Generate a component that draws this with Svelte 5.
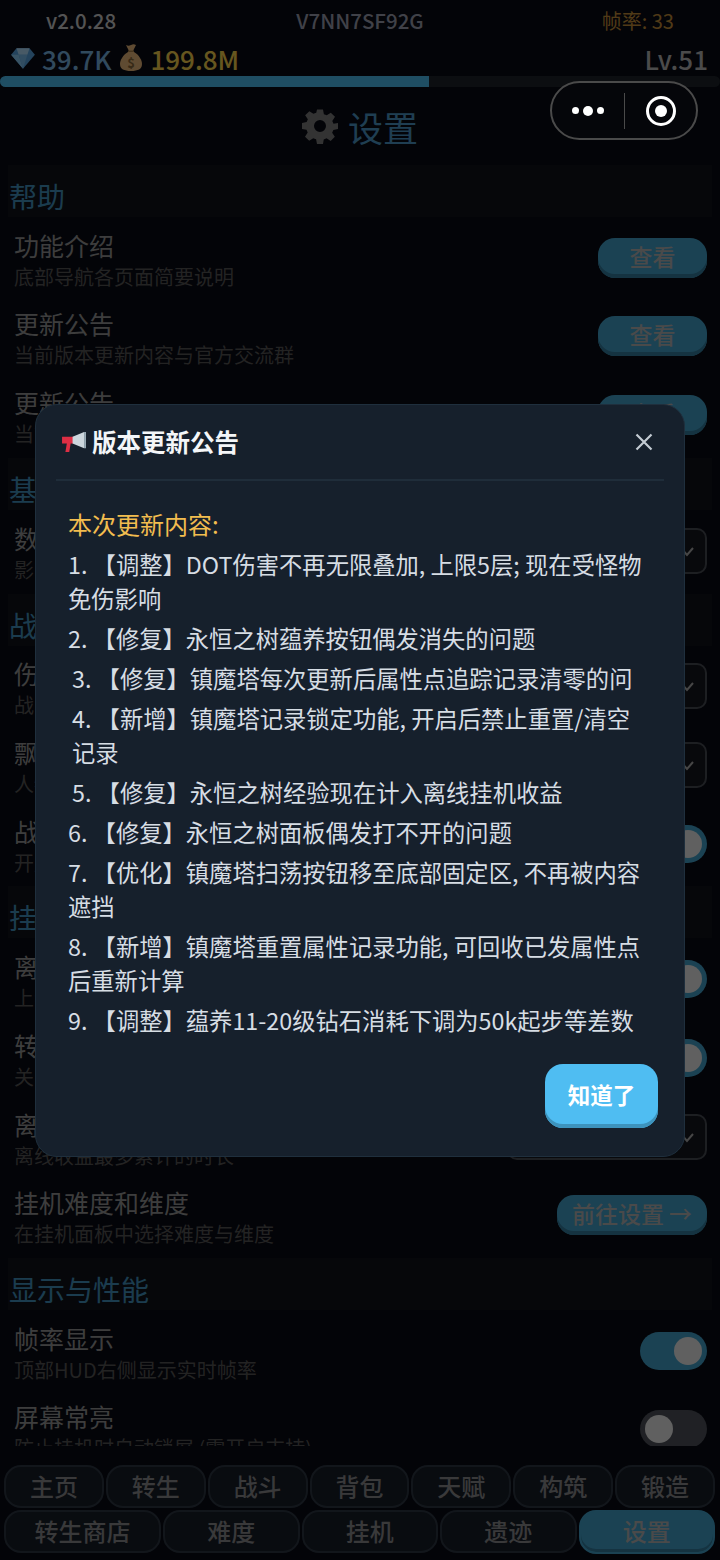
<script>
  const navTop = ['主页', '转生', '战斗', '背包', '天赋', '构筑', '锻造'];
  const navBottom = ['转生商店', '难度', '挂机', '遗迹', '设置'];

  const sections = [
    {
      title: '帮助',
      rows: [
        { name: '功能介绍', desc: '底部导航各页面简要说明', btn: '查看' },
        { name: '更新公告', desc: '当前版本更新内容与官方交流群', btn: '查看' },
        { name: '更新公告', desc: '当前版本更新内容与官方交流群', btn: '查看' }
      ]
    },
    {
      title: '基础设置',
      rows: [{ name: '数字格式', desc: '影响全局数字的显示方式', select: true }]
    },
    {
      title: '战斗显示',
      rows: [
        { name: '伤害显示', desc: '战斗中伤害数字的显示方式', select: true },
        { name: '飘字数量', desc: '人物头顶飘字的数量上限', select: true },
        { name: '战斗特效', desc: '开启后显示战斗特效', toggle: true }
      ]
    },
    {
      title: '挂机设置',
      rows: [
        { name: '离线挂机', desc: '上线时结算离线收益', toggle: true },
        { name: '转生提示', desc: '关闭后不再弹出转生提示', toggle: true },
        { name: '离线时长', desc: '离线收益最多累计的时长', select: true },
        { name: '挂机难度和维度', desc: '在挂机面板中选择难度与维度', btn: '前往设置 →', wide: true }
      ]
    },
    {
      title: '显示与性能',
      rows: [
        { name: '帧率显示', desc: '顶部HUD右侧显示实时帧率', toggle: true },
        { name: '屏幕常亮', desc: '防止挂机时自动锁屏 (需开启支持)', toggle: false }
      ]
    }
  ];

  const notes = [
    { text: '1. 【调整】DOT伤害不再无限叠加, 上限5层; 现在受怪物免伤影响' },
    { text: '2. 【修复】永恒之树蕴养按钮偶发消失的问题' },
    { text: '3. 【修复】镇魔塔每次更新后属性点追踪记录清零的问', nudge: true },
    { text: '4. 【新增】镇魔塔记录锁定功能, 开启后禁止重置/清空记录', nudge: true },
    { text: '5. 【修复】永恒之树经验现在计入离线挂机收益', nudge: true },
    { text: '6. 【修复】永恒之树面板偶发打不开的问题' },
    { text: '7. 【优化】镇魔塔扫荡按钮移至底部固定区, 不再被内容遮挡' },
    { text: '8. 【新增】镇魔塔重置属性记录功能, 可回收已发属性点后重新计算' },
    { text: '9. 【调整】蕴养11-20级钻石消耗下调为50k起步等差数' }
  ];
</script>

<div class="app">
  <header class="hud">
    <div class="hud-top">
      <span>v2.0.28</span>
      <span class="uid">V7NN7SF92G</span>
      <span class="fps">帧率: 33</span>
    </div>
    <div class="hud-res">
      <svg class="res-icon" viewBox="0 0 24 24" width="26" height="26">
        <path d="M6 3h12l5 6-11 13L1 9z" fill="#5aa9e6" />
        <path d="M6 3h12l-2 6H8z" fill="#b5e2ff" />
        <path d="M1 9h7l4 13z" fill="#8cd0fa" />
        <path d="M8 9h8l-4 13z" fill="#7cc0f2" />
      </svg>
      <span class="gems">39.7K</span>
      <svg class="res-icon" viewBox="0 0 24 28" width="24" height="28">
        <path d="M7 1c2 1 3 1 5 0s3-1 5 0l-3 6h-4z" fill="#eebc7d" />
        <path d="M9 8h6c5 3 8 8 8 12 0 5-4 7-11 7S1 25 1 20c0-4 3-9 8-12z" fill="#eebc7d" />
        <path d="M9 6.500h6v1.500H9z" fill="#a87f4a" />
        <text x="12" y="23.500" class="dollar">$</text>
      </svg>
      <span class="gold">199.8M</span>
      <span class="level">Lv.51</span>
    </div>
    <div class="xp"><div class="xp-fill" style="width: 59.6%"></div></div>
  </header>

  <main class="scroll">
    <h1 class="page-title">
      <svg viewBox="0 0 24 24" width="36" height="36">
        <path
          fill="#808080"
          fill-rule="evenodd"
          d="M10 1h4l.6 3.1 1.9.8 2.7-1.8 2.8 2.8-1.8 2.7.8 1.9L24 10v4l-3.1.6-.8 1.9 1.8 2.7-2.8 2.8-2.7-1.8-1.9.8L14 24h-4l-.6-3.1-1.9-.8-2.7 1.8L2 19.100l1.800-2.700-.8-1.900L0 14v-4l3.100-.6.8-1.900L2.100 4.900 4.900 2.100l2.700 1.800 1.900-.8zM12 8a4 4 0 1 0 0 8 4 4 0 0 0 0-8z"
        />
      </svg>
      <span>设置</span>
    </h1>

    {#each sections as section}
      <section>
        <h2 class="section-title">{section.title}</h2>
        {#each section.rows as row}
          <div class="row">
            <div class="row-text">
              <div class="row-name">{row.name}</div>
              <div class="row-desc">{row.desc}</div>
            </div>
            {#if row.btn}
              <button class="btn" class:wide={row.wide}>{row.btn}</button>
            {:else if row.select}
              <div class="select">
                <svg viewBox="0 0 16 16" width="16" height="16">
                  <path d="M2 5l6 7 6-7" fill="none" stroke="#b0b0b0" stroke-width="2" />
                </svg>
              </div>
            {:else}
              <div class="toggle" class:on={row.toggle}><i></i></div>
            {/if}
          </div>
        {/each}
      </section>
    {/each}
  </main>

  <nav class="nav">
    <div class="nav-row">
      {#each navTop as item}
        <div class="tab">{item}</div>
      {/each}
    </div>
    <div class="nav-row bottom">
      {#each navBottom as item}
        <div class="tab" class:active={item === '设置'}>{item}</div>
      {/each}
    </div>
  </nav>

  <div class="overlay">
    <div class="modal">
      <div class="modal-head">
        <div class="modal-title">
          <svg viewBox="0 0 28 24" width="27" height="23">
            <path d="M1 7h12v7H10l-1.500 9H4.500L6 14H1z" fill="#dd2e44" />
            <path d="M12 7l12-5v17l-12-5z" fill="#ccd6dd" />
            <path d="M24 2h2v17h-2z" fill="#99aab5" />
          </svg>
          <span>版本更新公告</span>
        </div>
        <svg class="close" viewBox="0 0 18 18" width="18" height="18">
          <path d="M1.500 1.500l15 15M16.500 1.500l-15 15" stroke="#c3cbd3" stroke-width="2.200" />
        </svg>
      </div>
      <div class="modal-body">
        <div class="notes-title">本次更新内容:</div>
        {#each notes as note}
          <p class="note" class:nudge={note.nudge}>{note.text}</p>
        {/each}
      </div>
      <div class="modal-foot">
        <button class="ok">知道了</button>
      </div>
    </div>
  </div>

  <div class="capsule">
    <div class="dots"><i></i><b></b><i></i></div>
    <span class="sep"></span>
    <div class="target"><i></i></div>
  </div>
</div>

<style>
  :global(body) {
    margin: 0;
    background: #080a14;
  }

  .app {
    position: relative;
    width: 720px;
    height: 1560px;
    display: flex;
    flex-direction: column;
    overflow: hidden;
    background: #080a14;
    color: #9a9a9a;
    font-family: 'Noto Sans CJK SC', 'Noto Sans', sans-serif;
  }

  .hud {
    flex: none;
  }

  .hud-top {
    display: grid;
    grid-template-columns: 1fr 1fr 1fr;
    height: 40px;
    align-items: center;
    padding: 0 46px;
    font-size: 20.500px;
    font-weight: 500;
    color: #d0d0d0;
  }

  .uid {
    text-align: center;
    white-space: nowrap;
    color: #a0a4b4;
  }

  .fps {
    text-align: right;
    color: #c8923a;
    font-size: 20px;
    font-weight: 400;
  }

  .hud-res {
    display: flex;
    align-items: center;
    height: 36px;
    padding: 0 12px 0 10px;
    font-size: 26px;
    font-weight: 500;
  }

  .res-icon {
    flex: none;
  }

  .dollar {
    font-size: 13px;
    font-weight: 700;
    fill: #8a6a3a;
    text-anchor: middle;
  }

  .gems {
    margin: 0 8px 0 6px;
    color: #7cb8e8;
  }

  .gold {
    margin-left: 7px;
    color: #ffd84f;
  }

  .level {
    margin-left: auto;
    color: #bbb;
  }

  .xp {
    height: 11px;
    border-radius: 6px;
    overflow: hidden;
    background: #1e252c;
  }

  .xp-fill {
    height: 100%;
    background: #4fc3f7;
  }

  .scroll {
    flex: 1;
    min-height: 0;
    overflow: hidden;
    margin-bottom: 19px;
  }

  .page-title {
    display: flex;
    justify-content: center;
    align-items: center;
    gap: 10px;
    height: 78px;
    margin: 0;
    font-size: 35px;
    font-weight: 400;
    color: #4f9ccc;
  }

  section + section {
    margin-top: 1.500px;
  }

  .section-title {
    margin: 0 8px 3.600px;
    padding: 8px 1px 0;
    height: 44px;
    line-height: 46px;
    font-size: 28px;
    font-weight: 400;
    color: #4496c4;
    background: #10131a;
  }

  .row {
    display: flex;
    align-items: center;
    justify-content: space-between;
    height: 78.600px;
    padding: 0 13px 0 14px;
  }

  .row-name {
    font-size: 25px;
    line-height: 34px;
    color: #9a9a9a;
  }

  .row-desc {
    font-size: 20px;
    line-height: 30px;
    color: #585858;
  }

  .btn,
  .select,
  .toggle {
    margin-bottom: 4px;
  }

  .btn {
    width: 109px;
    height: 40px;
    padding: 0 0 4px;
    border: 0;
    border-radius: 17px;
    font: inherit;
    font-size: 23px;
    font-weight: 500;
    color: #b8b8b8;
    background: #44a6d0;
    box-shadow: inset 0 -4px 0 #3580a2;
  }

  .btn.wide {
    width: 150px;
  }

  .select {
    display: flex;
    align-items: center;
    justify-content: flex-end;
    box-sizing: border-box;
    width: 200px;
    height: 46px;
    padding-right: 10px;
    background: #14171e;
    border: 2px solid #4a4e56;
    border-radius: 10px;
  }

  .toggle {
    display: flex;
    align-items: center;
    box-sizing: border-box;
    width: 67px;
    height: 38px;
    padding: 0 5px;
    border-radius: 19px;
    background: #50545c;
  }

  .toggle.on {
    justify-content: flex-end;
    background: #44a6d0;
  }

  .toggle i {
    width: 28px;
    height: 28px;
    border-radius: 50%;
    background: #f0f0f0;
  }

  .nav {
    flex: none;
    display: flex;
    flex-direction: column;
    gap: 2px;
    height: 95px;
    padding: 0 5px 0 4px;
  }

  .nav-row {
    display: grid;
    grid-template-columns: repeat(7, 1fr);
    gap: 2px;
  }

  .nav-row.bottom {
    grid-template-columns: 157px repeat(4, 1fr);
  }

  .tab {
    box-sizing: border-box;
    height: 43px;
    line-height: 38px;
    text-align: center;
    font-size: 24px;
    font-weight: 500;
    color: #8e8e92;
    background: #181e28;
    border: 2px solid #2e3844;
    border-radius: 17px;
  }

  .tab.active {
    height: 44px;
    color: #b8b8b8;
    background: #44a6d0;
    border-color: #44a6d0;
    box-shadow: inset 0 -3px 0 #3580a2;
  }

  .overlay {
    position: absolute;
    inset: 0;
    display: flex;
    align-items: center;
    justify-content: center;
    background: rgba(0, 0, 0, 0.6);
  }

  .modal {
    box-sizing: border-box;
    width: 650px;
    height: 753px;
    padding: 0 20px;
    display: flex;
    flex-direction: column;
    border: 1px solid #1f2f3d;
    border-radius: 22px;
    background: #16202c;
  }

  .modal-head {
    display: flex;
    align-items: center;
    justify-content: space-between;
    box-sizing: border-box;
    height: 76px;
    padding: 0 11px 0 5px;
    border-bottom: 2px solid #1f2d3a;
  }

  .modal-title {
    display: flex;
    align-items: center;
    gap: 4px;
    font-size: 24.500px;
    font-weight: 700;
    color: #f4f6f8;
  }

  .modal-body {
    padding: 26px 0 0 12px;
    font-size: 23.300px;
    line-height: 34px;
    color: #d6dde4;
  }

  .notes-title {
    margin-bottom: 6px;
    font-size: 24px;
    color: #f2bd4f;
  }

  .note {
    width: 580px;
    margin: 0 0 6px;
  }

  .note.nudge {
    padding-left: 4px;
    width: 570px;
  }

  .modal-foot {
    display: flex;
    justify-content: flex-end;
    margin-top: auto;
    padding: 0 6px 28px 0;
  }

  .ok {
    width: 113px;
    height: 64px;
    padding: 0 0 4px;
    border: 0;
    border-radius: 18px;
    font: inherit;
    font-size: 22.500px;
    font-weight: 700;
    color: #fff;
    background: #4fbdf2;
    box-shadow: inset 0 -4px 0 #3d93bd;
  }

  .capsule {
    position: absolute;
    top: 81px;
    left: 550px;
    box-sizing: border-box;
    width: 148px;
    height: 59px;
    display: flex;
    align-items: center;
    border: 2px solid #4a4a4a;
    border-radius: 30px;
    background: #05060a;
  }

  .dots {
    display: flex;
    align-items: center;
    justify-content: center;
    gap: 4px;
    width: 72px;
  }

  .dots i {
    width: 7px;
    height: 7px;
    border-radius: 50%;
    background: #fff;
  }

  .dots b {
    width: 10px;
    height: 10px;
    border-radius: 50%;
    background: #fff;
  }

  .sep {
    width: 1px;
    height: 36px;
    background: #4a4a4a;
  }

  .target {
    display: flex;
    align-items: center;
    justify-content: center;
    box-sizing: border-box;
    width: 30px;
    height: 30px;
    margin-left: 21px;
    border: 3px solid #fff;
    border-radius: 50%;
  }

  .target i {
    width: 12px;
    height: 12px;
    border-radius: 50%;
    background: #fff;
  }
</style>
